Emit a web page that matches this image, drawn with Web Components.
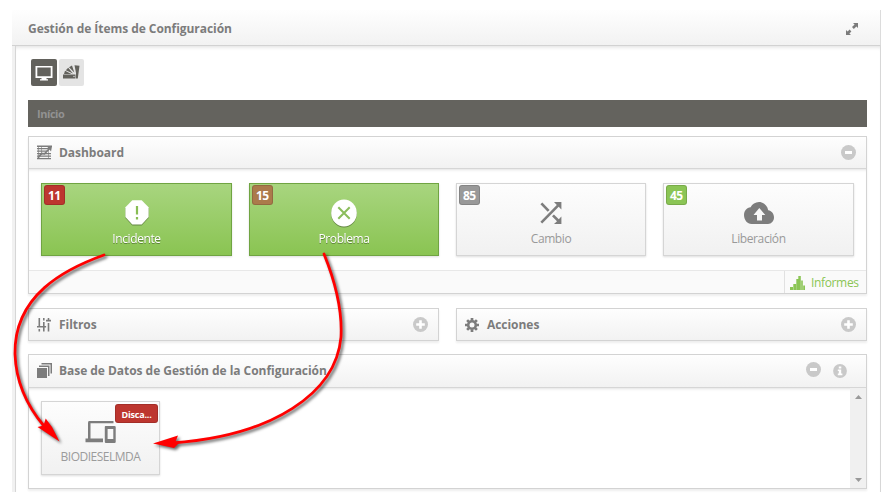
<!DOCTYPE html>
<html lang="es"><head><meta charset="utf-8"><title>Gestión de Ítems de Configuración</title>
<style>
html,body{margin:0;height:501px;background:#fff;overflow:hidden}
body{font:12px/16px "Open Sans",sans-serif;color:#7c7c7c}
.row{display:grid;grid-template-columns:411px 411px;gap:17px;margin-top:14px}
.tiles{display:grid;grid-template-columns:191px 190px 190px 191px;gap:17px;padding:14px 12px}
.dash{margin:9px 1px 0 0}.base{margin:13px 1px 0 0}
</style></head><body>
<ci-window heading="Gestión de Ítems de Configuración">
  <ci-toolbar></ci-toolbar>
  <ci-crumb>Início</ci-crumb>
  <ci-panel class="dash" icon="dash" heading="Dashboard" actions="minus">
    <div class="tiles">
      <ci-tile green badge="11" tone="#bd362f" icon="alert">Incidente</ci-tile>
      <ci-tile green badge="15" tone="#ab7a4b" icon="cross">Problema</ci-tile>
      <ci-tile badge="85" tone="#999" icon="shuffle">Cambio</ci-tile>
      <ci-tile badge="45" tone="#8bc555" icon="cloud">Liberación</ci-tile>
    </div>
    <ci-report>Informes</ci-report>
  </ci-panel>
  <div class="row">
    <ci-panel icon="sliders" heading="Filtros" actions="plus"></ci-panel>
    <ci-panel icon="gear" heading="Acciones" actions="plus"></ci-panel>
  </div>
  <ci-panel class="base" tall icon="stack" heading="Base de Datos de Gestión de la Configuración" actions="minus info">
    <ci-scroll><ci-tile device badge="Disca..." tone="#bd362f" icon="devices">BIODIESELMDA</ci-tile></ci-scroll>
  </ci-panel>
</ci-window>
<ci-arrows></ci-arrows>
<script>
const icons={
 expand:[14,14,'<path d="M8 1h5v5l-1.6-1.6-2.6 2.5-1.8-1.8 2.6-2.6zM1 13V8l1.6 1.6 2-2 1.8 1.8-2 2L6 13z"/>'],
 monitor:[18,16,'<path d="M.5 1h17v12h-6v1.200h1.500V15.500H5v-1.300h1.500V13h-6zM2.300 2.600v8.600h13.400V2.600z" fill-rule="evenodd"/>'],
 swatch:[17,14,'<path d="M0 9.500h12.500V13.500H0z"/><path d="M1 9 2 5.800 8.500 9zM2.800 5.200 5.200 2.800 10 8.500zM6 2.200 9 .5l2.300 7zM11.500.3 16.500 .8 14.800 13.500H13V8z"/><circle cx="11" cy="11.500" r=".7" fill="#ddd"/>'],
 dash:[15,15,'<path d="M0 .5h15v1.400H0zM0 3h12v1.300H0zM0 5.500h10v1.300H0zM0 8h14v1.200H0zM0 10.500h14v1.300H0zM0 13h14v1.300H0z"/><path d="M1 1h1v13H1zM4 1h1v9H4zM11 5h1v9h-1z" opacity=".6"/><path d="m1 13 3.500-4.500 3 .3L13 3" fill="none" stroke="currentColor" stroke-width="1.700"/><path d="M10 1.500h5l-1 5z"/>'],
 sliders:[14,14,'<path d="M1.500 0h1.600v8H5v1.600H0V8h1.500zM1.500 11h1.600v2.500H1.500zM6 0h1.600v2.500H6zM6 4h1.600v4h1.500v1.600H7.600v3.900H6V9.600H4.700V8H6zM10.700 0h1.600v1.800H14v1.600H9V1.800h1.700zM10.700 5h1.600v8.500h-1.600z"/>'],
 gear:[14,14,'<circle cx="7" cy="7" r="3.800" fill="none" stroke="currentColor" stroke-width="2.600"/><path d="M7 0v2.500M7 11.500V14M0 7h2.500M11.500 7H14M2.100 2.100l1.800 1.800M10.100 10.100l1.800 1.800M2.100 11.900l1.800-1.800M10.100 3.900l1.800-1.800" stroke="currentColor" stroke-width="2.700"/>'],
 stack:[15,15,'<path d="M0 5h10v10H0zM2 2.500h10.500V13H11V4H2zM4.500 0H15v10.500h-1.500v-9h-9z"/>'],
 alert:[24,25,'<path fill="#fff" d="M7.300.3h9.400l6.900 7v9.600l-6.900 7.600H7.300L.4 17V7.300z"/><path fill="#88bd54" d="M10.900 6h2.200v8.500h-2.200zM10.900 17h2.200v2.400h-2.200z"/>'],
 cross:[26,28,'<ellipse cx="13" cy="14" rx="12.800" ry="13.600" fill="#fff"/><path d="m7.300 8.200 11.400 11.600M18.700 8.200 7.300 19.800" stroke="#8bbd5c" stroke-width="2"/>'],
 shuffle:[22,22,'<path d="M14 0h7.400v7.500l-2.700-2.700L2.200 21.600.4 19.800 16.800 3zM.4 2.300 2.300.5l7.300 7.400-1.900 1.900zM12 14.300l1.900-1.900 4.900 4.800 2.600-2.600V22H14l3-2.800z"/>'],
 cloud:[30,22,'<path fill-rule="evenodd" d="M24.200 8.200C23.300 3.400 19.600 0 15 0c-3.700 0-6.800 2.100-8.400 5.300C2.800 5.700 0 9 0 13c0 5 3.500 9 7.500 9H24c3.400 0 6-2.900 6-6.700 0-3.700-2.600-6.800-5.800-7.100zM18 13v5.500h-5V13H9.500L15.300 6l6 7z"/>'],
 devices:[31,22,'<path d="M4 0h24.500v2.300H5.500V17.500H18v3.800H.5v-3.800H3V2Q3 0 4 0z"/><path d="M20.500 5h9q1.200 0 1.200 1v15q0 1-1.200 1H21q-1.200 0-1.200-1V6q0-1 .7-1zm2.100 3v10h5.700V8z" fill-rule="evenodd"/>'],
 bars:[15,14,'<path d="M0 11h3v3H0zM3.300 8h2.800v6H3.300zM6.300 3h2V0h2.500v14H6.300zM11.200 4.500h1.600v9.500h-1.600zM13.200 9.500H15V14h-1.800z"/>'],
 minus:[15,15,'<circle cx="7.500" cy="7.500" r="7.500"/><path fill="#fff" d="M4 6h7v3H4z"/>'],
 plus:[15,15,'<circle cx="7.500" cy="7.500" r="7.500"/><path fill="#fff" d="M3.200 6.200h3V3.200h2.600v3h3v2.600h-3v3H6.200v-3h-3z"/>'],
 info:[14,14,'<circle cx="7" cy="7" r="6.900"/><path fill="#fff" d="M5.800 2.600h2.500v2H5.800zM4.800 5.600h3.400v4h1.200v1.600H4.800V9.600h1V7.100h-1z"/>']
};
class Base extends HTMLElement{
 connectedCallback(){this.attachShadow({mode:'open'}).innerHTML='<style>*{box-sizing:border-box}'+this.css()+'</style>'+this.html()}
 a(n){return this.getAttribute(n)||''}
}
customElements.define('ci-icon',class extends Base{
 css(){return ':host{display:block;flex:none}svg{display:block;fill:currentColor}'}
 html(){const [w,h,p]=icons[this.a('name')];return `<svg width="${w}" height="${h}" viewBox="0 0 ${w} ${h}">${p}</svg>`}
});
customElements.define('ci-window',class extends Base{
 css(){return `:host{display:block;padding:10px 15px 10px 12px;height:501px;box-sizing:border-box}
 header{height:36px;width:869px;display:flex;align-items:center;justify-content:space-between;padding:2px 21px 0 16px;border-bottom:1px solid #d2d2d2;border-right:1px solid #dcdcdc;background:linear-gradient(#fefefe,#f2f2f2);font-weight:700;letter-spacing:-.05px}
 .frame{width:869px;height:446px;border-left:3px solid #f1f1f1;border-right:1px solid #d7d7d7}
 main{height:446px;border-left:1px solid #d6d6d6;padding:13px 12px 0;box-shadow:inset 0 4px 4px -3px #ddd}`}
 html(){return `<header><span>${this.a('heading')}</span><ci-icon name="expand"></ci-icon></header><div class="frame"><main><slot></slot></main></div>`}
});
customElements.define('ci-toolbar',class extends Base{
 css(){return `:host{display:flex;gap:2px;height:41px;padding-left:3px}
 div{width:26px;height:27px;display:grid;place-items:center;border-radius:2px;background:#62615c;color:#fff;padding-right:1px}.b{background:#e4e4e4;color:#62615c;width:25px;padding:0 0 2px}`}
 html(){return '<div><ci-icon name="monitor"></ci-icon></div><div class="b"><ci-icon name="swatch"></ci-icon></div>'}
});
customElements.define('ci-crumb',class extends Base{
 css(){return ':host{display:flex;align-items:center;width:839px;height:27px;box-sizing:border-box;padding:1px 9px 0;background:#64635e;color:#929292;font-size:11px;font-weight:700;letter-spacing:-.45px}'}
 html(){return '<slot></slot>'}
});
customElements.define('ci-panel',class extends Base{
 css(){return `:host{display:block;border:1px solid #d3d3d3;box-shadow:0 2px 2px #eee;box-sizing:border-box}
 header{height:31px;display:flex;align-items:center;padding:0 10px 0 8px;background:linear-gradient(#fefefe,#f2f2f2);font-weight:700;letter-spacing:-.04px}
 :host([tall]) header{height:32px;padding-right:19px;padding-bottom:1px}
 .body{border-top:1px solid #d6d6d6;box-shadow:inset 0 3px 3px -2px #e2e2e2}
 .i{width:22px}.t{flex:1}.acts{display:flex;gap:12px;color:#c9c9c9;padding-bottom:1px}.acts ci-icon+ci-icon{padding-top:2px}`}
 html(){const body=this.children.length?'<div class="body"><slot></slot></div>':'';
 return `<header><div class="i"><ci-icon name="${this.a('icon')}"></ci-icon></div><span class="t">${this.a('heading')}</span><div class="acts">${this.a('actions').split(' ').map(n=>`<ci-icon name="${n}"></ci-icon>`).join('')}</div></header>${body}`}
});
customElements.define('ci-tile',class extends Base{
 css(){return `:host{position:relative;display:flex;flex-direction:column;align-items:center;height:73px;box-sizing:border-box;border:1px solid #d5d5d5;background:linear-gradient(#fdfdfd,#f1f1f1);box-shadow:0 1px 2px #ddd;color:#999}
 :host([green]){border-color:#70a442;background:linear-gradient(#a8d57f,#8ac452);color:#fff}
 .ic{height:47px;display:flex;align-items:center;padding-top:10px;color:#7d7d7d}
 .l{letter-spacing:-.4px}
 .badge{position:absolute;left:2px;top:1px;height:20px;min-width:20px;padding:1px 3px;border:1px solid #0002;border-radius:3px;color:#fff;font-weight:700;font-size:12px;line-height:17px;text-align:center;letter-spacing:-.5px}
 :host([green]) .ic,:host([green]) .l{filter:drop-shadow(0 1px 0 #0005)}
 :host([device]){width:119px;height:74px;color:#9b9b9b}
 :host([device]) .l{letter-spacing:-.5px}
 :host([device]) .badge{left:auto;right:1px;top:2px;width:43px;height:19px;font-size:9px;letter-spacing:-.2px}
 :host([device]) .ic{padding-top:13px}`}
 html(){return `<div class="badge" style="background:${this.a('tone')}">${this.a('badge')}</div><div class="ic"><ci-icon name="${this.a('icon')}"></ci-icon></div><div class="l"><slot></slot></div>`}
});
customElements.define('ci-report',class extends Base{
 css(){return ':host{display:flex;justify-content:flex-end;height:23px;box-sizing:border-box;background:#fafafa;border-top:1px solid #e8e8e8;color:#8bc555}div{display:flex;align-items:center;width:82px;padding:2px 5px 0;border-left:1px solid #e1e1e1;gap:6px;letter-spacing:-.35px}'}
 html(){return '<div><ci-icon name="bars"></ci-icon><span><slot></slot></span></div>'}
});
customElements.define('ci-scroll',class extends Base{
 css(){return ':host{display:flex;justify-content:space-between;height:100px}.c{padding:14px 12px 0;margin-top:-1px}.s{width:16px;background:#f0f0f0;display:flex;flex-direction:column;justify-content:space-between;align-items:center;padding:7px 0 6px}svg{display:block;fill:#999}'}
 html(){return '<div class="c"><slot></slot></div><div class="s"><svg width="7" height="4"><path d="M0 4 3.500 0 7 4z"/></svg><svg width="7" height="4"><path d="M0 0h7L3.500 4z"/></svg></div>'}
});
customElements.define('ci-arrows',class extends Base{
 css(){return ':host{position:absolute;inset:0;pointer-events:none}svg{display:block;filter:drop-shadow(2px 2px 1.500px #0009)}'}
 html(){return `<svg width="896" height="501"><g fill="none" stroke="#f00" stroke-width="2.800" stroke-linecap="round"><path d="M104 255C65 269 14 295 15 354C16 382 27 406 44 426"/><path d="M324 254C339 291 342 318 341 337C336 393 273 436 172 443"/></g><g fill="#f00"><path d="M59.500 441.500 37.500 427 43.500 425.500 45.700 418.500 52 427z"/><path d="M153 443.500 178 435.500 175.500 441.700 179 443 174 448z"/></g></svg>`}
});
</script></body></html>
